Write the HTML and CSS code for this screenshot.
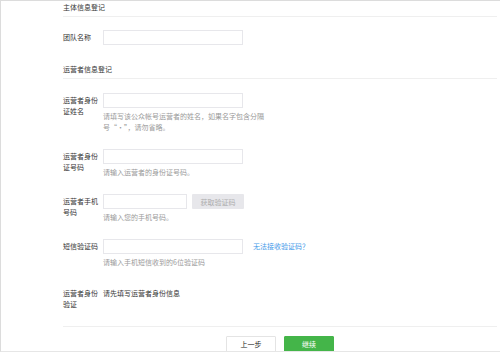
FILE: index.html
```html
<!DOCTYPE html>
<html lang="zh-CN">
<head>
    <meta charset="UTF-8">
    <meta name="viewport" content="width=device-width, initial-scale=1.0">
    <title>信息登记</title>
    <link rel="stylesheet" href="styles.css">
</head>
<body>

    <div class="page">

        <!-- 主体信息 -->
        <h2 class="section-title">主体信息登记</h2>
        <div class="form-row row-first">
            <label class="form-label">团队名称</label>
            <div class="form-field">
                <input type="text" class="text-input">
            </div>
        </div>

        <!-- 运营者信息 -->
        <h2 class="section-title section-gap">运营者信息登记</h2>

        <div class="form-row row-first">
            <label class="form-label">运营者身份证姓名</label>
            <div class="form-field">
                <input type="text" class="text-input">
                <p class="form-tips">请填写该公众帐号运营者的姓名，如果名字包含分隔号“·”，请勿省略。</p>
            </div>
        </div>

        <div class="form-row">
            <label class="form-label">运营者身份证号码</label>
            <div class="form-field">
                <input type="text" class="text-input">
                <p class="form-tips">请输入运营者的身份证号码。</p>
            </div>
        </div>

        <div class="form-row">
            <label class="form-label">运营者手机号码</label>
            <div class="form-field">
                <div class="field-line">
                    <input type="text" class="text-input input-short">
                    <button type="button" class="btn-code" disabled>获取验证码</button>
                </div>
                <p class="form-tips">请输入您的手机号码。</p>
            </div>
        </div>

        <div class="form-row">
            <label class="form-label">短信验证码</label>
            <div class="form-field">
                <div class="field-line">
                    <input type="text" class="text-input">
                    <a href="#" class="help-link">无法接收验证码？</a>
                </div>
                <p class="form-tips">请输入手机短信收到的6位验证码</p>
            </div>
        </div>

        <div class="form-row row-plain">
            <label class="form-label">运营者身份验证</label>
            <div class="form-field">
                <p class="form-text">请先填写运营者身份信息</p>
            </div>
        </div>

        <div class="form-actions">
            <button type="button" class="btn btn-default">上一步</button>
            <button type="button" class="btn btn-primary">继续</button>
        </div>

    </div>

</body>
</html>
```

FILE: styles.css
```css
body {
    font-family: "Noto Sans CJK SC", "Noto Sans", sans-serif;
    font-size: 7px;
    color: #353535;
    margin: 0;
    background: #fff;
}
.page {
    height: 352px;
    box-sizing: border-box;
    border-top: 1px solid #dcdcdc;
    border-left: 1px solid #dcdcdc;
    border-bottom: 1px solid #e6e6e6;
    padding: 0 3px 0 62px;
    overflow: hidden;
}
.section-title {
    margin: 0;
    font-size: 7px;
    font-weight: normal;
    line-height: 10px;
    padding: 1px 0 4px;
    border-bottom: 1px solid #efefef;
}
.section-gap {
    margin-top: 18px;
}
.form-row {
    display: flex;
    margin-top: 16px;
}
.row-first {
    margin-top: 13px;
}
.section-gap + .row-first {
    margin-top: 14px;
}
.row-plain {
    padding-top: 2px;
}
.form-label {
    width: 40px;
    flex-shrink: 0;
    padding-top: 2px;
    line-height: 11px;
    color: #353535;
}
.form-field {
    flex: 1;
}
.field-line {
    display: flex;
    align-items: center;
}
.text-input {
    display: block;
    width: 140px;
    height: 15px;
    box-sizing: border-box;
    border: 1px solid #e7e7eb;
    padding: 0 4px;
    font-size: 7px;
    outline: none;
}
.input-short {
    width: 84px;
}
.btn-code {
    width: 52px;
    height: 15px;
    margin-left: 5px;
    border: none;
    border-radius: 1px;
    background-color: #e7e7eb;
    color: #adadad;
    font-family: inherit;
    font-size: 7px;
    padding: 0;
}
.help-link {
    margin-left: 10px;
    color: #459ae9;
    text-decoration: none;
    line-height: 11px;
}
.form-tips {
    margin: 3px 0 0;
    width: 164px;
    line-height: 11px;
    color: #9a9a9a;
}
.form-text {
    margin: 0;
    padding-top: 2px;
    line-height: 11px;
    color: #353535;
}
.form-actions {
    display: flex;
    justify-content: center;
    gap: 8px;
    margin-top: 16px;
    padding-top: 9px;
    border-top: 1px solid #efefef;
}
.btn {
    width: 50px;
    height: 16px;
    box-sizing: border-box;
    font-family: inherit;
    font-size: 7px;
    border-radius: 1px;
    padding: 0;
    cursor: pointer;
}
.btn-default {
    background-color: #fff;
    border: 1px solid #e4e4e4;
    color: #222;
}
.btn-primary {
    background-color: #44b549;
    border: 1px solid #44b549;
    color: #fff;
}
```
